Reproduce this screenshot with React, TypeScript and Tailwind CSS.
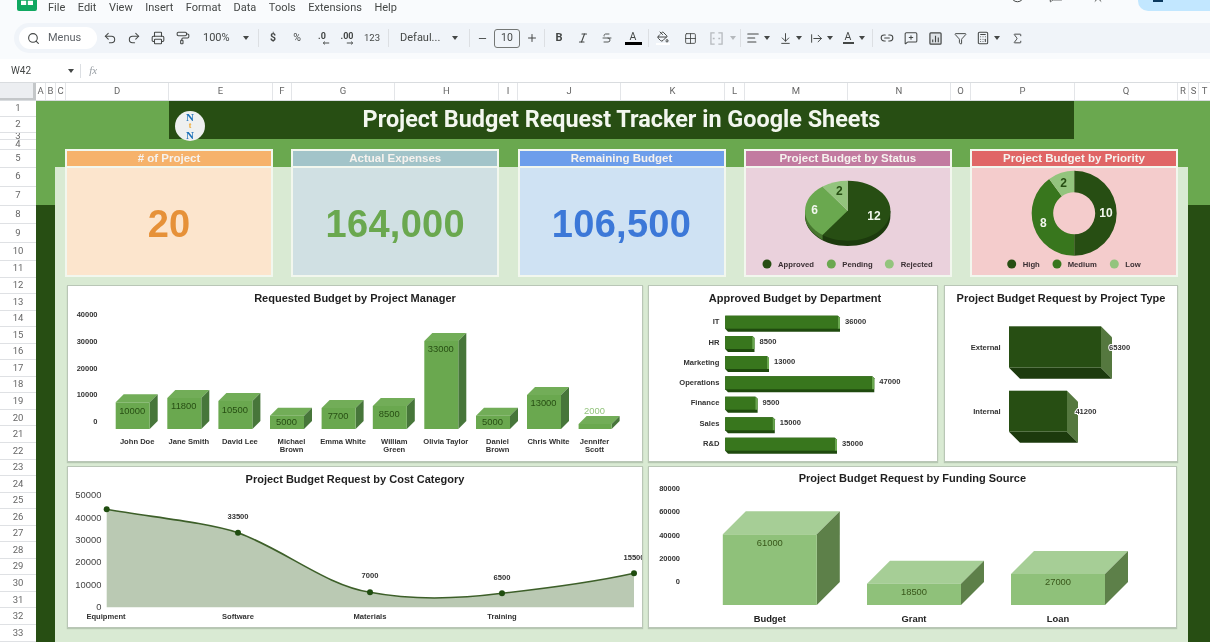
import React from "react";
import {
  Search, Undo2, Redo2, Printer, PaintRoller, PaintBucket, Grid2x2, AlignLeft, ArrowDownToLine,
  ArrowRightFromLine, Link2, MessageSquarePlus, Filter, Calculator, Sigma, Minus, Plus, Italic,
  Strikethrough, MessageSquare, Presentation, Circle,
} from "lucide-react";

const DARK = "#274e13";

const Caret = ({ c = "border-t-[#444746]" }: { c?: string }) => (
  <div className="w-2 flex justify-center">
    <div className={`border-x-[3px] border-t-[4px] border-x-transparent ${c}`} />
  </div>
);
const Sep = ({ className = "" }: { className?: string }) => <div className={`w-px h-[18px] bg-[#dcdfe3] ${className}`} />;
const Slot = ({ children, className = "" }: { children: React.ReactNode; className?: string }) => (
  <div className={`w-6 h-6 flex items-center justify-center shrink-0 ${className}`}>{children}</div>
);
const Slim = ({ children, className = "" }: { children: React.ReactNode; className?: string }) => (
  <div className={`w-5 h-6 flex items-center justify-center shrink-0 ${className}`}>{children}</div>
);
const ic = { size: 14, strokeWidth: 1.8, color: "#444746" };

function MenuBar() {
  const items = [
    ["File", "ml-[11px]"], ["Edit", "ml-[12.5px]"], ["View", "ml-[12.5px]"], ["Insert", "ml-[12.5px]"], ["Format", "ml-[12.5px]"],
    ["Data", "ml-[12.5px]"], ["Tools", "ml-[12.5px]"], ["Extensions", "ml-[12.5px]"], ["Help", "ml-[12.5px]"],
  ];
  return (
    <div className="h-[23px] flex items-start bg-[#f9fbfd] overflow-hidden font-['Roboto',sans-serif]">
      <svg viewBox="0 0 20 20" className="w-[20px] h-[20px] ml-[17px] -mt-[9px] shrink-0">
        <rect width="20" height="20" rx="2" fill="#11a861" />
        <rect x="4" y="4" width="12" height="10" fill="#fff" />
        <path d="M10 4v10M4 9h12" stroke="#11a861" strokeWidth="1.6" />
      </svg>
      {items.map(([t, c]) => (
        <span key={t} className={`${c} h-[16px] leading-[16px] text-[11px] text-[#444746]`}>{t}</span>
      ))}
      <div className="ml-auto flex items-start">
        <Circle size={15} strokeWidth={1.6} color="#444746" className="-mt-[12px]" />
        <MessageSquare size={15} strokeWidth={1.6} color="#444746" className="-mt-[12px] ml-[24px]" />
        <Presentation size={14} strokeWidth={1.6} color="#444746" className="-mt-[11px] ml-[27px]" />
        <div className="ml-[33px] w-[72px] h-[11px] rounded-bl-[10px] bg-[#c2e7ff] pl-[15px]">
          <div className="w-[10px] h-[1.5px] bg-[#0b3a5e]" />
        </div>
      </div>
    </div>
  );
}

function Toolbar() {
  const t = "text-[10.5px] text-[#444746] leading-none";
  return (
    <div className="h-[30px] ml-[14px] pl-[5px] rounded-l-[15px] bg-[#f0f4f9] flex items-center font-['Roboto',sans-serif]">
      <div className="w-[78px] h-[22px] rounded-full bg-white flex items-center pl-[8px] gap-[8px]">
        <Search size={13} strokeWidth={2} color="#444746" />
        <span className="text-[11px] text-[#5f6368]">Menus</span>
      </div>
      <Slot className="ml-[1px]"><Undo2 {...ic} /></Slot>
      <Slot><Redo2 {...ic} /></Slot>
      <Slot><Printer {...ic} /></Slot>
      <Slot className="ml-[1px]"><PaintRoller {...ic} /></Slot>
      <div className="ml-[8px] w-[47px] flex items-center justify-between">
        <span className="text-[11px] text-[#444746]">100%</span>
        <Caret />
      </div>
      <Sep className="ml-[8px]" />
      <Slot className="ml-[2px]"><span className={`${t} font-bold`}>$</span></Slot>
      <Slot><span className={t}>%</span></Slot>
      <Slot className="ml-[1px]">
        <div className="flex flex-col items-center">
          <span className="text-[9px] leading-[9px] text-[#444746] font-bold">.0</span>
          <svg viewBox="0 0 10 5" className="w-[8px] h-[4px] ml-[8px]"><path d="M9 2.5H2M3.5 .8 1.5 2.5l2 1.7" fill="none" stroke="#444746" strokeWidth="1.2" /></svg>
        </div>
      </Slot>
      <Slot className="ml-[1px]">
        <div className="flex flex-col items-center">
          <span className="text-[9px] leading-[9px] text-[#444746] font-bold">.00</span>
          <svg viewBox="0 0 10 5" className="w-[8px] h-[4px] ml-[6px]"><path d="M1 2.5h7M6.5 .8l2 1.7-2 1.7" fill="none" stroke="#444746" strokeWidth="1.2" /></svg>
        </div>
      </Slot>
      <Slot className="ml-[1px]"><span className="text-[9.5px] text-[#444746]">123</span></Slot>
      <Sep className="ml-[4px]" />
      <div className="ml-[11px] w-[59px] flex items-center justify-between">
        <span className="text-[11px] text-[#444746]">Defaul...</span>
        <Caret />
      </div>
      <Sep className="ml-[10px]" />
      <Slot><Minus size={11} strokeWidth={2} color="#444746" /></Slot>
      <div className="w-[26px] h-[19px] rounded-[3px] border border-[#747775] flex items-center justify-center text-[10.5px] text-[#444746]">10</div>
      <Slot><Plus size={12} strokeWidth={2} color="#444746" /></Slot>
      <Sep />
      <Slot className="ml-[2px]"><span className="text-[11px] font-bold text-[#444746]">B</span></Slot>
      <Slot><Italic size={12} strokeWidth={2.2} color="#444746" /></Slot>
      <Slot><Strikethrough size={12} strokeWidth={1.8} color="#444746" /></Slot>
      <Slot className="ml-[2px]">
        <div className="flex flex-col items-center">
          <span className="text-[10.5px] leading-[11px] text-[#444746]">A</span>
          <div className="w-[17px] h-[2.5px] bg-black" />
        </div>
      </Slot>
      <Sep className="ml-[3px]" />
      <Slot className="ml-[2px]">
        <div className="flex flex-col items-center">
          <PaintBucket size={12} strokeWidth={2} color="#444746" />
          <div className="w-[14px] h-[2.5px] bg-white" />
        </div>
      </Slot>
      <Slot className="ml-[3px]"><Grid2x2 size={13} strokeWidth={1.6} color="#444746" /></Slot>
      <Slot className="ml-[2px]">
        <svg viewBox="0 0 14 14" className="w-[13px] h-[13px]"><path d="M5 1H1v12h4M9 1h4v12H9M3 7h2M11 7H9" fill="none" stroke="#b5b9bd" strokeWidth="1.4" /></svg>
      </Slot>
      <div className="ml-[1px]"><Caret c="border-t-[#b5b9bd]" /></div>
      <Sep className="ml-[3px]" />
      <Slim className="ml-[2px]"><AlignLeft {...ic} /></Slim>
      <Caret />
      <Slim className="ml-[4px]"><ArrowDownToLine size={13} strokeWidth={1.8} color="#444746" /></Slim>
      <Caret />
      <Slim className="ml-[3px]"><ArrowRightFromLine size={13} strokeWidth={1.8} color="#444746" /></Slim>
      <Caret />
      <Slim className="ml-[4px]">
        <div className="flex flex-col items-center">
          <span className="text-[10.5px] leading-[10px] text-[#444746]">A</span>
          <div className="w-[11px] h-[1.5px] bg-[#444746]" />
        </div>
      </Slim>
      <Caret />
      <Sep className="ml-[6px]" />
      <Slot className="ml-[2px]"><Link2 {...ic} /></Slot>
      <Slot><MessageSquarePlus {...ic} /></Slot>
      <Slot>
        <svg viewBox="0 0 14 14" className="w-[13px] h-[13px]"><rect x="1" y="1" width="12" height="12" rx="1" fill="#dfe3e7" stroke="#444746" strokeWidth="1.3" /><path d="M4 11V8M7 11V4M10 11V6" stroke="#444746" strokeWidth="1.2" /></svg>
      </Slot>
      <Slot className="ml-[1px]"><Filter size={13} strokeWidth={1.8} color="#444746" /></Slot>
      <Slim className="ml-[1px]"><Calculator {...ic} /></Slim>
      <Caret />
      <Slot className="ml-[4px]"><Sigma size={13} strokeWidth={1.8} color="#444746" /></Slot>
    </div>
  );
}

function FormulaBar() {
  return (
    <div className="h-[23px] mt-[6px] bg-white flex items-center font-['Roboto',sans-serif] text-[#444746]">
      <span className="ml-[11px] text-[10px]">W42</span>
      <div className="ml-[36px]"><Caret /></div>
      <div className="ml-[5px] w-px h-[14px] bg-[#dcdfe3]" />
      <span className="ml-[8px] text-[11px] italic font-['Liberation_Serif',serif] text-[#9aa0a6]">fx</span>
    </div>
  );
}

const columns: [string, string][] = [
  ["A", "w-[10px]"], ["B", "w-[10px]"], ["C", "w-[10px]"], ["D", "w-[103px]"], ["E", "w-[104px]"], ["F", "w-[19px]"],
  ["G", "w-[103px]"], ["H", "w-[104px]"], ["I", "w-[19px]"], ["J", "w-[103px]"], ["K", "w-[104px]"], ["L", "w-[20px]"],
  ["M", "w-[103px]"], ["N", "w-[103px]"], ["O", "w-[20px]"], ["P", "w-[104px]"], ["Q", "w-[103px]"], ["R", "w-[11px]"],
  ["S", "w-[10px]"], ["T", "w-[12px]"],
];

function ColumnHeader() {
  return (
    <div className="h-[19px] flex bg-white border-y border-[#d9dcdf] font-['Roboto',sans-serif]">
      <div className="w-[36px] bg-[#eceef1] border-r-[3px] border-b-[2px] border-[#c4c7c9] shrink-0" />
      {columns.map(([l, w]) => (
        <div key={l} className={`${w} shrink-0 border-r border-[#e3e5e8] flex items-center justify-center text-[9.5px] text-[#666]`}>{l}</div>
      ))}
    </div>
  );
}

const rowHeights = [
  "h-[16px]", "h-[16px]", "h-[7px]", "h-[10px]", "h-[17.5px]", "h-[19px]", "h-[19px]", "h-[18.5px]", "h-[18.5px]", "h-[18px]", "h-[17px]",
];
function RowHeader() {
  const rows = Array.from({ length: 33 }, (_, i) => i + 1);
  return (
    <div className="w-[36px] shrink-0 bg-white overflow-hidden font-['Roboto',sans-serif]">
      {rows.map((n) => (
        <div key={n} className={`${rowHeights[n - 1] ?? "h-[16.55px]"} border-b border-[#dfe1e4] flex items-center justify-center text-[9.5px] text-[#666] overflow-hidden`}>{n}</div>
      ))}
    </div>
  );
}

function Logo() {
  return (
    <div className="absolute left-[6px] top-[10px] w-[30px] h-[30px] rounded-full bg-[#eef0f0] flex flex-col items-center justify-center font-['Liberation_Serif',serif] font-bold">
      <span className="text-[11px] leading-[10px] text-[#1c70b8]">N</span>
      <span className="text-[8px] leading-[8px] text-[#eda932]">t</span>
      <span className="text-[11px] leading-[10px] text-[#1c70b8]">N</span>
    </div>
  );
}

function Kpi({ title, head, body, children }: { title: string; head: string; body: string; children: React.ReactNode }) {
  return (
    <div className="h-[128px] border-2 border-[#f2f7ee] flex flex-col min-w-0">
      <div className={`h-[17px] shrink-0 border-b-2 border-[#f2f7ee] flex items-center justify-center text-[11.5px] font-bold text-[#f6f2ee] ${head}`}>{title}</div>
      <div className={`flex-1 min-h-0 flex items-center justify-center ${body}`}>{children}</div>
    </div>
  );
}

function pt(cx: number, cy: number, rx: number, ry: number, deg: number) {
  const a = (deg * Math.PI) / 180;
  return [cx + rx * Math.sin(a), cy - ry * Math.cos(a)];
}
function wedge(cx: number, cy: number, rx: number, ry: number, a: number, b: number) {
  const [x1, y1] = pt(cx, cy, rx, ry, a);
  const [x2, y2] = pt(cx, cy, rx, ry, b);
  const large = b - a > 180 ? 1 : 0;
  return `M${cx} ${cy}L${x1} ${y1}A${rx} ${ry} 0 ${large} 1 ${x2} ${y2}Z`;
}
function ring(cx: number, cy: number, r: number, ir: number, a: number, b: number) {
  const [x1, y1] = pt(cx, cy, r, r, a);
  const [x2, y2] = pt(cx, cy, r, r, b);
  const [x3, y3] = pt(cx, cy, ir, ir, b);
  const [x4, y4] = pt(cx, cy, ir, ir, a);
  const large = b - a > 180 ? 1 : 0;
  return `M${x1} ${y1}A${r} ${r} 0 ${large} 1 ${x2} ${y2}L${x3} ${y3}A${ir} ${ir} 0 ${large} 0 ${x4} ${y4}Z`;
}

function Legend({ items }: { items: [number, number, string, string][] }) {
  return (
    <>
      {items.map(([dx, tx, col, label]) => (
        <g key={label}>
          <circle cx={dx} cy={264} r={4.5} fill={col} />
          <text x={tx} y={266.8} fontSize={7.7} fontWeight={700} fill="#3a2f33">{label}</text>
        </g>
      ))}
    </>
  );
}

function StatusPie() {
  const c = { cx: 846.7, cy: 210.7, rx: 42.7, ry: 30 };
  return (
    <svg viewBox="745 168 204 107" className="w-full h-full">
      <path d="M804 211v5c0 16.6 19.1 30 42.7 30s42.7-13.4 42.7-30v-5z" fill="#1c3a0d" />
      <path d="M804 211v5c0 9 6 17 17.6 24l0-5z" fill="#47762f" />
      <path d={wedge(c.cx, c.cy, c.rx, c.cy - 180.7, 0, 216)} fill={DARK} />
      <path d={wedge(c.cx, c.cy, c.rx, c.ry, 216, 324)} fill="#6aa84f" />
      <path d={wedge(c.cx, c.cy, c.rx, c.ry, 324, 360)} fill="#93c47d" />
      <text x={838.3} y={195} textAnchor="middle" fontSize={12} fontWeight={700} fill={DARK}>2</text>
      <text x={813.7} y={213.5} textAnchor="middle" fontSize={12} fontWeight={700} fill="#f1f6ed">6</text>
      <text x={873} y={220} textAnchor="middle" fontSize={12} fontWeight={700} fill="#f1f6ed">12</text>
      <Legend items={[[766, 777, DARK, "Approved"], [830.3, 841.3, "#6aa84f", "Pending"], [888.3, 899.7, "#93c47d", "Rejected"]]} />
    </svg>
  );
}

function PriorityDonut() {
  const [cx, cy, r, ir] = [1074.2, 213.3, 42.5, 21];
  return (
    <svg viewBox="972 168 204 107" className="w-full h-full">
      <path d={ring(cx, cy, r, ir, 0, 180)} fill={DARK} />
      <path d={ring(cx, cy, r, ir, 180, 324)} fill="#38761d" />
      <path d={ring(cx, cy, r, ir, 324, 360)} fill="#93c47d" />
      <text x={1106} y={217} textAnchor="middle" fontSize={12} fontWeight={700} fill="#f1f6ed">10</text>
      <text x={1043.3} y={226.5} textAnchor="middle" fontSize={12} fontWeight={700} fill="#f1f6ed">8</text>
      <text x={1063.7} y={186.5} textAnchor="middle" fontSize={12} fontWeight={700} fill={DARK}>2</text>
      <Legend items={[[1011.7, 1022.7, DARK, "High"], [1057, 1067.7, "#38761d", "Medium"], [1114.3, 1125.3, "#93c47d", "Low"]]} />
    </svg>
  );
}

function Box({ x, w, top, base, d, front, topC, side }: { x: number; w: number; top: number; base: number; d: number; front: string; topC: string; side: string }) {
  const r = x + w;
  return (
    <g>
      <polygon points={`${x},${top} ${x + d},${top - d} ${r + d},${top - d} ${r},${top}`} fill={topC} />
      <polygon points={`${r},${top} ${r + d},${top - d} ${r + d},${base - d} ${r},${base}`} fill={side} />
      <rect x={x} y={top} width={w} height={base - top} fill={front} />
    </g>
  );
}

function Title({ x, y, children }: { x: number; y: number; children: string }) {
  return <text x={x} y={y} textAnchor="middle" fontSize={11} fontWeight={700} fill="#1f1f1f">{children}</text>;
}

const chartCard = "bg-white outline outline-1 -outline-offset-1 outline-[#b9c6b6] shadow-[0_1px_1px_rgba(80,100,80,0.25)] shrink-0 overflow-hidden";

function ManagerChart() {
  const bars: [number, number, string, string[], number][] = [
    [115.7, 402.3, "10000", ["John Doe"], 414],
    [167.3, 398, "11800", ["Jane Smith"], 409],
    [218.4, 401, "10500", ["David Lee"], 412.5],
    [270, 415.7, "5000", ["Michael", "Brown"], 425],
    [321.6, 408, "7700", ["Emma White"], 419],
    [372.8, 406, "8500", ["William", "Green"], 417],
    [424.3, 341, "33000", ["Olivia Taylor"], 352],
    [476, 415.7, "5000", ["Daniel", "Brown"], 425],
    [527, 395, "13000", ["Chris White"], 406],
  ];
  return (
    <svg viewBox="67 285 576 177" className="w-full h-full">
      <Title x={355} y={301.5}>Requested Budget by Project Manager</Title>
      {[["40000", 314], ["30000", 341], ["20000", 368], ["10000", 394], ["0", 421]].map(([t, y]) => (
        <text key={t} x={97.5} y={Number(y) + 2.6} textAnchor="end" fontSize={7.5} fontWeight={700} fill="#333">{t}</text>
      ))}
      {bars.map(([x, top, v, cat, ly]) => (
        <g key={cat[0]}>
          <Box x={x} w={34} top={top} base={429} d={8} front="#6aa84f" topC="#72ad58" side="#47763a" />
          <text x={x + 16.5} y={ly} textAnchor="middle" fontSize={9.4} fill={DARK}>{v}</text>
          {cat.map((c, i) => (
            <text key={c} x={x + 16.5 + 5} y={443.5 + i * 8} textAnchor="middle" fontSize={7.6} fontWeight={700} fill="#333">{c}</text>
          ))}
        </g>
      ))}
      <Box x={578.6} w={33} top={424} base={429} d={8} front="#6aa84f" topC="#72ad58" side="#47763a" />
      <text x={594.5} y={413.5} textAnchor="middle" fontSize={9.4} fill="#93c47d">2000</text>
      <text x={594.5} y={443.5} textAnchor="middle" fontSize={7.6} fontWeight={700} fill="#333">Jennifer</text>
      <text x={594.5} y={451.5} textAnchor="middle" fontSize={7.6} fontWeight={700} fill="#333">Scott</text>
    </svg>
  );
}

function DepartmentChart() {
  const rows: [string, string, number, number][] = [
    ["IT", "36000", 840, 315.7], ["HR", "8500", 754.5, 336], ["Marketing", "13000", 769, 356],
    ["Operations", "47000", 874.3, 376.3], ["Finance", "9500", 757.6, 396.7], ["Sales", "15000", 774.8, 417.3], ["R&D", "35000", 837, 437.7],
  ];
  return (
    <svg viewBox="648 285 290 177" className="w-full h-full">
      <Title x={795} y={301.5}>Approved Budget by  Department</Title>
      {rows.map(([c, v, end, y]) => (
        <g key={c}>
          <polygon points={`725.2,${y} ${end - 2},${y} ${end},${y + 2} ${end},${y + 16} 728,${y + 16} 725.2,${y + 13}`} fill="#1f4a0e" />
          <polygon points={`${end - 2.4},${y} ${end},${y + 2} ${end},${y + 13} ${end - 2.4},${y + 13}`} fill="#6aa84f" />
          <rect x={725.2} y={y} width={end - 727.6} height={13} fill="#38761d" />
          <text x={719.4} y={y + 8.5} textAnchor="end" fontSize={7.6} fontWeight={700} fill="#333">{c}</text>
          <text x={end + 5} y={y + 8} fontSize={7.6} fontWeight={700} fill="#333">{v}</text>
        </g>
      ))}
    </svg>
  );
}

function TypeChart() {
  const items: [string, string, number, number, number, number, number][] = [
    ["External", "65300", 1101, 326.3, 367.7, 1109, 349.5],
    ["Internal", "41200", 1067, 390.7, 431.7, 1075.4, 414],
  ];
  return (
    <svg viewBox="944 285 233.5 177" className="w-full h-full">
      <Title x={1061} y={301.5}>Project Budget Request by Project Type</Title>
      {items.map(([c, v, r, t, b, vx, vy]) => (
        <g key={c}>
          <polygon points={`1009,${b} ${r},${b} ${r + 11},${b + 11} 1020,${b + 11}`} fill="#1c3a0d" />
          <polygon points={`${r},${t} ${r + 11},${t + 11} ${r + 11},${b + 11} ${r},${b}`} fill="#55783f" />
          <rect x={1009} y={t} width={r - 1009} height={b - t} fill={DARK} />
          <text x={1000.7} y={vy} textAnchor="end" fontSize={7.6} fontWeight={700} fill="#333">{c}</text>
          <text x={vx} y={vy} fontSize={7.6} fontWeight={700} fill="#333" stroke="#fff" strokeWidth={2} paintOrder="stroke">{v}</text>
        </g>
      ))}
    </svg>
  );
}

function CostChart() {
  const line = "M106.7 509.3C150 517 205 522 238 532.7C285 550 325 585 370 592.3C405 599 450 600 502 593.3C550 588 590 583 634 573.3";
  const pts = [[106.7, 509.3], [238, 532.7], [370, 592.3], [502, 593.3], [634, 573.3]];
  return (
    <svg viewBox="67 466 576 162" className="w-full h-full">
      <Title x={355} y={483.3}>Project Budget Request by Cost Category</Title>
      {[["50000", 495], ["40000", 517.7], ["30000", 540], ["20000", 562], ["10000", 585], ["0", 607]].map(([t, y]) => (
        <text key={t} x={101.4} y={Number(y) + 3.4} textAnchor="end" fontSize={9.4} fill="#444">{t}</text>
      ))}
      <path d={`${line}V607.3H106.7Z`} fill="#bac9b3" />
      <path d={line} fill="none" stroke="#3d5f29" strokeWidth={1.6} />
      {pts.map(([x, y]) => <circle key={x} cx={x} cy={y} r={3} fill="#1f4d0f" />)}
      {[["33500", 238, 518.5], ["7000", 370, 578], ["6500", 502, 579.5], ["15500", 634, 559.5]].map(([t, x, y]) => (
        <text key={t as string} x={x} y={y} textAnchor="middle" fontSize={7.6} fontWeight={700} fill="#333">{t}</text>
      ))}
      {[["Equipment", 106], ["Software", 238], ["Materials", 370], ["Training", 502]].map(([t, x]) => (
        <text key={t as string} x={x} y={618.5} textAnchor="middle" fontSize={7.6} fontWeight={700} fill="#333">{t}</text>
      ))}
    </svg>
  );
}

function FundingChart() {
  const boxes: [string, string, number, number, number][] = [
    ["Budget", "61000", 722.8, 534.3, 545.5],
    ["Grant", "18500", 867, 583.7, 595.3],
    ["Loan", "27000", 1011, 574, 585.3],
  ];
  return (
    <svg viewBox="648 466 529 162" className="w-full h-full">
      <Title x={912.4} y={482}>Project Budget Request by Funding Source</Title>
      {[["80000", 488.3], ["60000", 511.7], ["40000", 535], ["20000", 558], ["0", 581.3]].map(([t, y]) => (
        <text key={t} x={680} y={Number(y) + 2.6} textAnchor="end" fontSize={7.5} fontWeight={700} fill="#333">{t}</text>
      ))}
      {boxes.map(([c, v, x, top, ly]) => (
        <g key={c}>
          <Box x={x} w={94} top={top} base={605} d={23} front="#8fc17a" topC="#a6ce96" side="#5d8049" />
          <text x={x + 47} y={ly} textAnchor="middle" fontSize={9.4} fill="#38571a">{v}</text>
          <text x={x + 47} y={621.5} textAnchor="middle" fontSize={9.4} fontWeight={700} fill="#222">{c}</text>
        </g>
      ))}
    </svg>
  );
}

function Dashboard() {
  return (
    <div className="flex-1 min-w-0 flex flex-col bg-[#6aa84f] overflow-hidden font-['Liberation_Sans',sans-serif]">
      <div className="h-[66px] shrink-0 pl-[133px] pr-[136px]">
        <div className="relative h-[38px] bg-[#274e13] flex items-center justify-center font-['Roboto',sans-serif] text-[23.4px] font-bold text-[#f3f7ef]">
          <Logo />
          Project Budget Request Tracker in Google Sheets
        </div>
      </div>
      <div className="flex-1 flex min-h-0">
        <div className="w-[19px] shrink-0 flex flex-col">
          <div className="h-[38px] shrink-0" />
          <div className="flex-1 bg-[#274e13]" />
        </div>
        <div className="w-[1133px] shrink-0 bg-[#d9ead3] px-[10px]">
          <div className="-mt-[18px] grid grid-cols-5 gap-x-[18.25px]">
            <Kpi title="# of Project" head="bg-[#f6b26b]" body="bg-[#fce5cd]">
              <span className="mt-[6px] text-[38px] font-bold text-[#e69138]">20</span>
            </Kpi>
            <Kpi title="Actual Expenses" head="bg-[#a2c4c9]" body="bg-[#d0e0e3]">
              <span className="mt-[6px] text-[38px] font-bold text-[#6aa84f] tracking-[0.3px]">164,000</span>
            </Kpi>
            <Kpi title="Remaining Budget" head="bg-[#6d9eeb]" body="bg-[#cfe2f3]">
              <span className="mt-[6px] text-[38px] font-bold text-[#3c78d8] tracking-[0.3px]">106,500</span>
            </Kpi>
            <Kpi title="Project Budget by Status" head="bg-[#c27ba0]" body="bg-[#ead1dc]"><StatusPie /></Kpi>
            <Kpi title="Project Budget by Priority" head="bg-[#e06666]" body="bg-[#f4cccc]"><PriorityDonut /></Kpi>
          </div>
          <div className="mt-[8px] ml-[2px] flex h-[177px] gap-[5px]">
            <div className={`w-[576px] ${chartCard}`}><ManagerChart /></div>
            <div className={`w-[290px] ${chartCard}`}><DepartmentChart /></div>
            <div className={`w-[233.5px] ml-[1px] ${chartCard}`}><TypeChart /></div>
          </div>
          <div className="mt-[4px] ml-[2px] flex h-[162px] gap-[5px]">
            <div className={`w-[576px] ${chartCard}`}><CostChart /></div>
            <div className={`w-[529px] ${chartCard}`}><FundingChart /></div>
          </div>
        </div>
        <div className="flex-1 flex flex-col">
          <div className="h-[38px] shrink-0" />
          <div className="flex-1 bg-[#274e13]" />
        </div>
      </div>
    </div>
  );
}

export default function App() {
  return (
    <div className="w-[1210px] h-[642px] overflow-hidden bg-[#f9fbfd] flex flex-col blur-[0.3px]">
      <MenuBar />
      <Toolbar />
      <FormulaBar />
      <ColumnHeader />
      <div className="flex-1 min-h-0 flex">
        <RowHeader />
        <Dashboard />
      </div>
    </div>
  );
}
